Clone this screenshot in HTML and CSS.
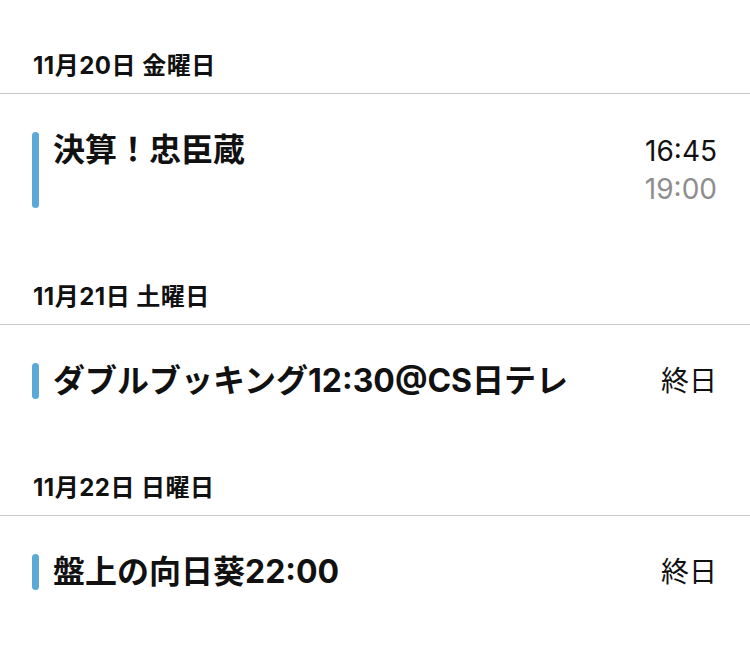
FILE: index.html
```html
<!DOCTYPE html>
<html lang="ja">
<head>
    <meta charset="UTF-8">
    <meta name="viewport" content="width=device-width, initial-scale=1.0">
    <title>予定リスト</title>
    <link rel="stylesheet" href="styles.css">
</head>
<body>
    <div class="agenda">
        <div class="day-header">11月20日 金曜日</div>
        <div class="event">
            <div class="event-bar"></div>
            <div class="event-title">決算！忠臣蔵</div>
            <div class="event-time">
                <span class="time-start">16:45</span>
                <span class="time-end">19:00</span>
            </div>
        </div>

        <div class="day-header">11月21日 土曜日</div>
        <div class="event">
            <div class="event-bar"></div>
            <div class="event-title">ダブルブッキング12:30@CS日テレ</div>
            <div class="event-time">
                <span class="time-allday">終日</span>
            </div>
        </div>

        <div class="day-header">11月22日 日曜日</div>
        <div class="event">
            <div class="event-bar"></div>
            <div class="event-title">盤上の向日葵22:00</div>
            <div class="event-time">
                <span class="time-allday">終日</span>
            </div>
        </div>
    </div>
</body>
</html>
```

FILE: styles.css
```css
/* agenda list */
body {
    margin: 0;
    padding: 0;
    background-color: #fff;
    color: #111;
    font-family: Inter, "Noto Sans CJK JP", sans-serif;
}

.agenda {
    padding-top: 34px;
}

.day-header {
    height: 59px;
    display: flex;
    align-items: center;
    padding-left: 33px;
    font-size: 24px;
    font-weight: bold;
    letter-spacing: 0.5px;
    border-bottom: 1px solid #c8c8c8;
}

.event {
    display: flex;
    align-items: stretch;
    padding: 38px 33px 57px 32px;
}

.event-bar {
    width: 7px;
    border-radius: 4px;
    background-color: #5aa9d6;
    flex-shrink: 0;
}

.event-title {
    flex: 1;
    margin-left: 14px;
    font-size: 32px;
    font-weight: bold;
    line-height: 36px;
}

.event-time {
    display: flex;
    flex-direction: column;
    align-items: flex-end;
    font-size: 28px;
    line-height: 38px;
}

.time-end {
    color: #8e8e8e;
}

.time-allday {
    line-height: 36px;
}
```
